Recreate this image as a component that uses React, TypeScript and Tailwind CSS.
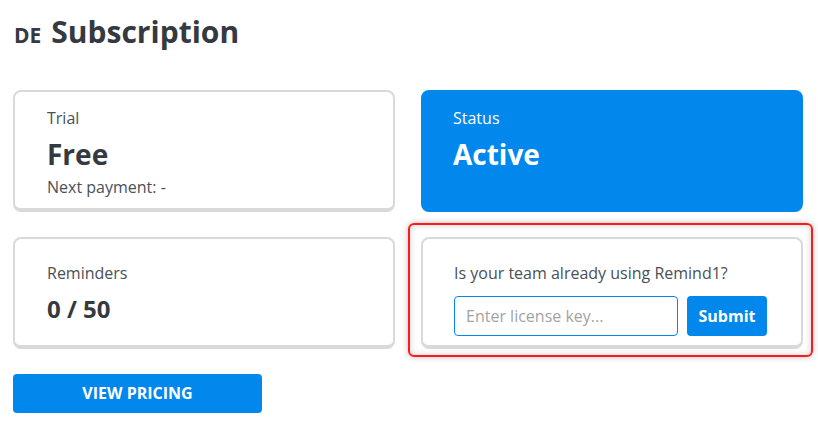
export default function App() {
  return (
    <div className="min-h-screen bg-white px-[13px] pt-[14px] font-['Open_Sans',sans-serif] text-[#343a40]">
      <h2 className="flex items-baseline gap-[10px] text-[30px] font-bold leading-[1.2]">
        <span className="pl-[1px] text-[21px]">DE</span>
        Subscription
      </h2>

      <div className="mt-[40px] grid w-[790px] grid-cols-2 gap-x-[26px] gap-y-[25px]">
        <div className="rounded-lg border-2 border-b-4 border-[#d9d9d9] pl-[32px] pt-[14px] pb-[9px]">
          <div className="text-[16px] leading-6 text-[#495057]">Trial</div>
          <div className="mt-[8px] text-[28px] font-bold leading-[1.2]">Free</div>
          <div className="mt-[3px] text-[16px] leading-6 text-[#495057]">Next payment: -</div>
        </div>

        <div className="rounded-lg border-2 border-[#0288ed] bg-[#0288ed] pl-[30px] pt-[14px] text-white">
          <div className="text-[16px] leading-6">Status</div>
          <div className="mt-[8px] text-[28px] font-bold leading-[1.2]">Active</div>
        </div>

        <div className="rounded-lg border-2 border-b-4 border-[#d9d9d9] pl-[32px] pt-[22px] pb-[21px]">
          <div className="text-[16px] leading-6 text-[#495057]">Reminders</div>
          <div className="mt-[10px] text-[24px] font-bold leading-[1.2]">0 / 50</div>
        </div>

        <div className="relative">
          <div className="pointer-events-none absolute -left-[13px] -right-[10px] -top-[14px] -bottom-[8px] rounded-md border-2 border-[#ff1a1a] shadow-[0_0_6px_rgba(0,0,0,0.25),inset_0_0_6px_rgba(0,0,0,0.2)]" />
          <div className="h-full rounded-lg border-2 border-b-4 border-[#d9d9d9] bg-white pl-[31px] pt-[22px] pb-[9px]">
            <div className="text-[16px] leading-6 text-[#495057]">Is your team already using Remind1?</div>
            <div className="mt-[11px] flex gap-[9px]">
              <input
                className="h-[40px] w-[224px] rounded-[4px] border border-[#0288ed] px-[11px] text-[16px] text-[#495057] outline-none placeholder:text-[#a3a3a3]"
                placeholder="Enter license key..."
              />
              <button className="h-[40px] w-[80px] rounded-[4px] bg-[#0288ed] text-[16px] font-bold text-white">
                Submit
              </button>
            </div>
          </div>
        </div>
      </div>

      <button className="mt-[25px] h-[39px] w-[249px] rounded-[4px] bg-[#0288ed] text-[16px] font-bold uppercase text-white">
        View Pricing
      </button>
    </div>
  );
}
